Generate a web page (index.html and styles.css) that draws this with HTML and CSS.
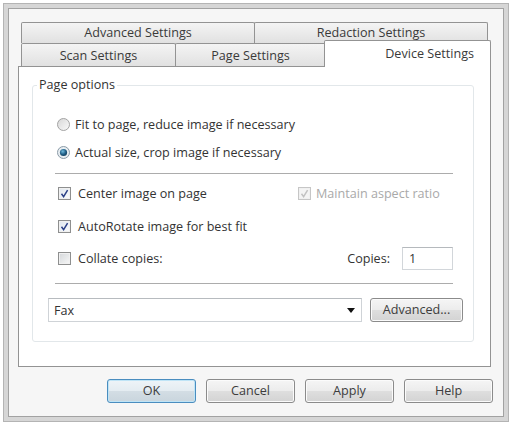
FILE: index.html
```html
<!DOCTYPE html>
<html lang="en">
<head>
    <meta charset="UTF-8">
    <meta name="viewport" content="width=device-width, initial-scale=1.0">
    <title>Device Settings</title>
    <link rel="stylesheet" href="styles.css">
</head>
<body>
    <div class="dialog">
        <div class="client">
            <div class="tabs">
                <div class="tab-row back">
                    <div class="tab">Advanced Settings</div>
                    <div class="tab">Redaction Settings</div>
                </div>
                <div class="tab-row front">
                    <div class="tab scan">Scan Settings</div>
                    <div class="tab page">Page Settings</div>
                    <div class="tab active">Device Settings</div>
                </div>
            </div>

            <div class="panel">
                <fieldset class="group">
                    <legend>Page options</legend>
                    <div class="group-body">
                        <div class="option radio-row first">
                            <span class="radio">
                                <svg width="13" height="13" viewBox="0 0 13 13">
                                    <defs>
                                        <linearGradient id="rg" x1="0" y1="0" x2="1" y2="1">
                                            <stop offset="0" stop-color="#d6d6d6"/>
                                            <stop offset="1" stop-color="#fbfbfb"/>
                                        </linearGradient>
                                    </defs>
                                    <circle cx="6.5" cy="6.5" r="6" fill="url(#rg)" stroke="#a3a3a3"/>
                                </svg>
                            </span>
                            Fit to page, reduce image if necessary
                        </div>
                        <div class="option radio-row second">
                            <span class="radio">
                                <svg width="13" height="13" viewBox="0 0 13 13">
                                    <defs>
                                        <radialGradient id="dot" cx="0.4" cy="0.35" r="0.7">
                                            <stop offset="0" stop-color="#6fb9dc"/>
                                            <stop offset="0.6" stop-color="#1f5e86"/>
                                            <stop offset="1" stop-color="#123c5a"/>
                                        </radialGradient>
                                    </defs>
                                    <circle cx="6.5" cy="6.5" r="6" fill="#e8eef2" stroke="#8a9aa6"/>
                                    <circle cx="6.5" cy="6.5" r="3.6" fill="url(#dot)"/>
                                </svg>
                            </span>
                            Actual size, crop image if necessary
                        </div>

                        <div class="separator sep-top"></div>

                        <div class="check-grid row-center">
                            <div class="option">
                                <span class="check on">
                                    <svg width="9" height="9" viewBox="0 0 9 9"><path d="M1.5 4.8 L3.6 7.6 L7.6 1.2" fill="none" stroke="#2a3f86" stroke-width="1.5"/></svg>
                                </span>
                                Center image on page
                            </div>
                            <div class="option disabled">
                                <span class="check on">
                                    <svg width="9" height="9" viewBox="0 0 9 9"><path d="M1.5 4.8 L3.6 7.6 L7.6 1.2" fill="none" stroke="#c2c2c2" stroke-width="1.5"/></svg>
                                </span>
                                Maintain aspect ratio
                            </div>
                        </div>

                        <div class="option row-rotate">
                            <span class="check on">
                                <svg width="9" height="9" viewBox="0 0 9 9"><path d="M1.5 4.8 L3.6 7.6 L7.6 1.2" fill="none" stroke="#2a3f86" stroke-width="1.5"/></svg>
                            </span>
                            AutoRotate image for best fit
                        </div>

                        <div class="copies-row">
                            <div class="option">
                                <span class="check"></span>
                                Collate copies:
                            </div>
                            <div class="copies">
                                <span>Copies:</span>
                                <div class="textbox">1</div>
                            </div>
                        </div>

                        <div class="separator sep-bottom"></div>

                        <div class="device-row">
                            <div class="combo">
                                <span>Fax</span>
                                <span class="arrow"></span>
                            </div>
                            <div class="btn small">Advanced...</div>
                        </div>
                    </div>
                </fieldset>
            </div>

            <div class="buttons">
                <div class="btn default">OK</div>
                <div class="btn">Cancel</div>
                <div class="btn">Apply</div>
                <div class="btn">Help</div>
            </div>
        </div>
    </div>
</body>
</html>
```

FILE: styles.css
```css
body {
    margin: 0;
    padding: 3px;
    background: #fff;
    font-family: "Open Sans", "Noto Sans", Arial, sans-serif;
    font-size: 12.6px;
    color: #333;
}

.dialog {
    width: 506px;
    height: 419px;
    box-sizing: border-box;
    border: 1px solid #b4b4b4;
    padding: 4px;
    background: #d6d6d6;
}

.client {
    height: 100%;
    box-sizing: border-box;
    border: 1px solid #a2a2a2;
    background: #f6f6f6;
    padding-top: 13px;
}

/* tab strip: two rows, the back one is inset a little */
.tabs {
    margin-left: 9px;
}

.tab-row {
    display: flex;
}

.tab {
    box-sizing: border-box;
    border: 1px solid #939393;
    border-bottom: none;
    border-radius: 2px 2px 0 0;
    background: linear-gradient(#f4f4f4, #e1e1e1);
    text-align: center;
    color: #3a3a3a;
}

.back {
    margin-left: 3px;
    height: 21px;
}

.back .tab {
    width: 234px;
    height: 21px;
    line-height: 20px;
}

.back .tab + .tab {
    margin-left: -1px;
}

.front {
    height: 23px;
    align-items: flex-start;
}

.front .tab {
    height: 23px;
    line-height: 24px;
}

.scan {
    margin-left: 3px;
    width: 155px;
}

.page {
    margin-left: -1px;
    width: 151px;
}

.tab.active {
    position: relative;
    z-index: 1;
    margin-left: -2px;
    margin-top: -3px;
    width: 167px;
    height: 27px;
    line-height: 26px;
    background: #fff;
    text-align: right;
    padding-right: 16px;
}

.panel {
    margin-left: 9px;
    width: 473px;
    height: 301px;
    box-sizing: border-box;
    border: 1px solid #939393;
    background: #fff;
    padding-top: 10px;
}

.group {
    margin: 0 16px 0 13px;
    padding: 0 0 19px;
    border: 1px solid #e2e7ea;
    border-radius: 3px;
}

.group legend {
    margin-left: 4px;
    padding: 0 2px;
    line-height: 16px;
}

.group-body {
    display: flex;
    flex-direction: column;
}

.option {
    display: flex;
    align-items: center;
    height: 18px;
    white-space: nowrap;
}

.radio-row {
    margin-left: 24px;
}

.radio-row.first {
    margin-top: 22px;
}

.radio-row.second {
    margin-top: 10px;
}

.radio {
    display: flex;
    width: 13px;
    height: 13px;
    margin-right: 5px;
}

.check {
    width: 13px;
    height: 13px;
    box-sizing: border-box;
    border: 1px solid #8e8f8f;
    background: linear-gradient(135deg, #d4d7da, #f7f7f7);
    box-shadow: inset 0 0 0 1px #f0f0f0;
    margin-right: 7px;
    display: flex;
    align-items: center;
    justify-content: center;
}

.check.on {
    background: linear-gradient(135deg, #dfe6ee, #fafbfc);
}

.disabled {
    color: #a9a9a9;
}

.disabled .check {
    border-color: #c6c6c6;
    background: #f4f4f4;
    margin-right: 5px;
}

.separator {
    height: 1px;
    background: #acacac;
    margin: 0 20px 0 22px;
}

.sep-top {
    margin-top: 12px;
}

.sep-bottom {
    margin-top: 13px;
}

.check-grid {
    display: grid;
    grid-template-columns: 240px auto;
    margin: 10px 0 0 25px;
}

.row-rotate {
    margin: 15px 0 0 25px;
}

.copies-row {
    display: flex;
    align-items: center;
    justify-content: space-between;
    height: 23px;
    margin: 12px 20px 0 25px;
}

.copies {
    display: flex;
    align-items: center;
    gap: 12px;
}

.textbox {
    width: 51px;
    height: 23px;
    box-sizing: border-box;
    border: 1px solid #d2d6da;
    border-top-color: #b5b9bd;
    padding-left: 6px;
    line-height: 21px;
}

.device-row {
    display: flex;
    align-items: center;
    justify-content: space-between;
    height: 24px;
    margin: 14px 10px 0 15px;
}

.combo {
    width: 314px;
    height: 24px;
    box-sizing: border-box;
    border: 1px solid #cfd3d7;
    border-top-color: #b7bbbf;
    display: flex;
    align-items: center;
    justify-content: space-between;
    padding: 0 6px 0 5px;
}

.arrow {
    width: 0;
    height: 0;
    border-left: 4px solid transparent;
    border-right: 4px solid transparent;
    border-top: 5px solid #111;
}

.btn {
    width: 89px;
    height: 24px;
    box-sizing: border-box;
    border: 1px solid #8b8b8b;
    border-radius: 3px;
    background: linear-gradient(#f5f5f5 0%, #ececec 48%, #dedede 52%, #d3d3d3 100%);
    box-shadow: inset 0 0 0 1px #fbfbfb;
    text-align: center;
    line-height: 21px;
    color: #3c3c3c;
}

.btn.small {
    width: 93px;
    height: 24px;
}

.btn.default {
    border-color: #4a8dbf;
    box-shadow: inset 0 0 0 1px #bfe4f6;
    background: linear-gradient(#eef4f8 0%, #e4ecf1 48%, #d3dde4 52%, #c9d5dd 100%);
}

.buttons {
    display: flex;
    justify-content: flex-end;
    gap: 10px;
    margin-top: 12px;
    padding-right: 10px;
}
```
